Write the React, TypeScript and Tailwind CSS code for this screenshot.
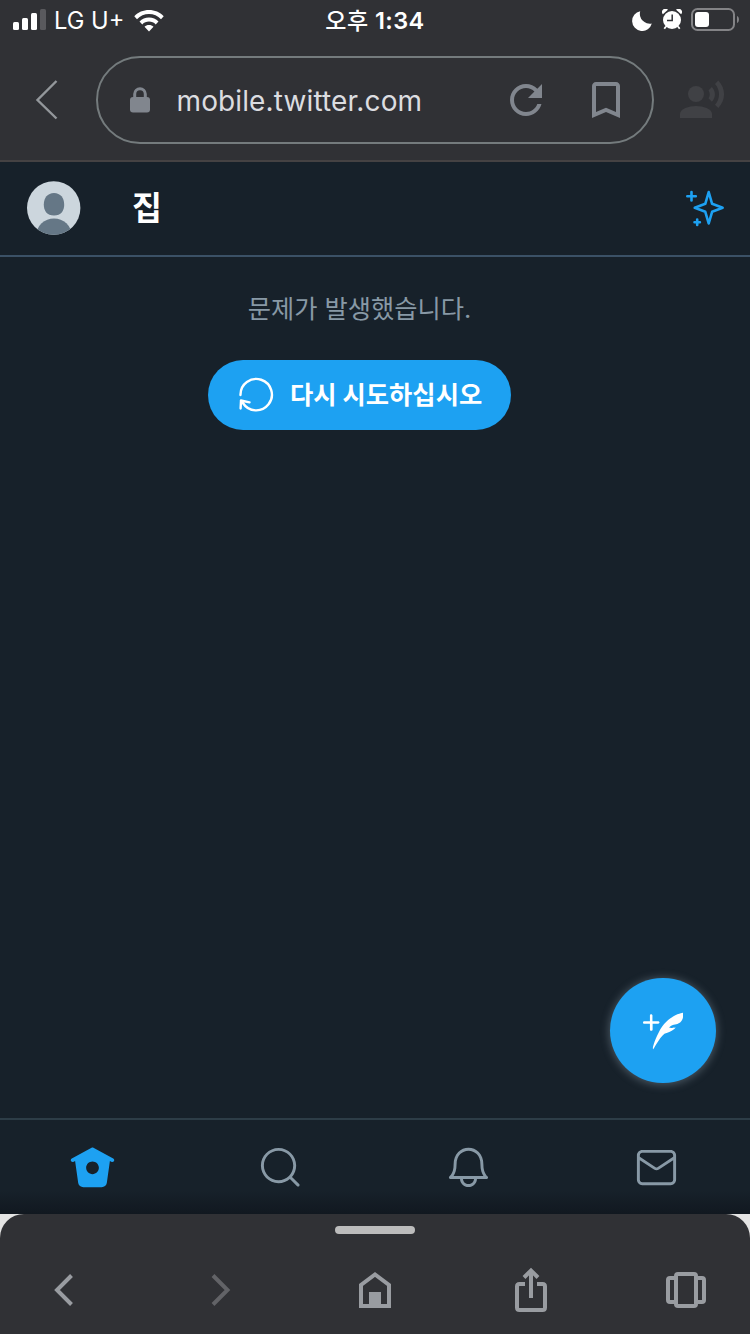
import type { ReactNode } from 'react';

const tabs = [
  {
    name: 'home',
    active: true,
    path: 'M22.58 7.35L12.475 1.897c-.297-.16-.654-.16-.95 0L1.425 7.35c-.486.264-.667.87-.405 1.356.18.335.525.525.88.525.16 0 .324-.038.475-.12l.734-.396 1.59 11.25c.216 1.214 1.31 2.062 2.66 2.062h9.282c1.35 0 2.444-.848 2.662-2.088l1.588-11.225.737.398c.485.263 1.092.082 1.354-.404.263-.486.08-1.093-.404-1.355zM12 15.435c-1.795 0-3.25-1.455-3.25-3.25s1.455-3.25 3.25-3.25 3.25 1.455 3.25 3.25-1.455 3.25-3.25 3.25z',
  },
  {
    name: 'search',
    active: false,
    path: 'M21.53 20.47l-3.66-3.66C19.195 15.24 20 13.214 20 11c0-4.97-4.03-9-9-9s-9 4.03-9 9 4.03 9 9 9c2.215 0 4.24-.804 5.808-2.13l3.66 3.66c.147.146.34.22.53.22s.385-.073.53-.22c.295-.293.295-.767.002-1.06zM3.5 11c0-4.135 3.365-7.5 7.5-7.5s7.5 3.365 7.5 7.5-3.365 7.5-7.5 7.5-7.5-3.365-7.5-7.5z',
  },
  {
    name: 'notifications',
    active: false,
    path: 'M21.697 16.468c-.02-.016-2.14-1.64-2.103-6.03.02-2.532-.812-4.782-2.347-6.335C15.872 2.71 14.01 1.94 12.005 1.93h-.013c-2.004.01-3.866.78-5.242 2.174-1.534 1.553-2.368 3.802-2.346 6.334.037 4.33-2.02 5.967-2.102 6.03-.26.193-.366.53-.265.838.102.308.39.515.712.515h4.92c.102 2.31 1.997 4.16 4.33 4.16s4.226-1.85 4.327-4.16h4.922c.322 0 .61-.206.71-.514.103-.307-.003-.645-.263-.838zM12 20.478c-1.505 0-2.73-1.177-2.828-2.658h5.656c-.1 1.48-1.323 2.66-2.828 2.66zM4.38 16.32c.74-1.132 1.548-3.028 1.524-5.896-.018-2.16.644-3.982 1.913-5.267C8.91 4.05 10.397 3.437 12 3.43c1.603.008 3.087.62 4.18 1.728 1.27 1.285 1.933 3.106 1.915 5.267-.024 2.868.785 4.765 1.525 5.896H4.38z',
  },
  {
    name: 'messages',
    active: false,
    path: 'M19.25 3.018H4.75C3.233 3.018 2 4.252 2 5.77v12.495c0 1.518 1.233 2.753 2.75 2.753h14.5c1.517 0 2.75-1.235 2.75-2.753V5.77c0-1.518-1.233-2.752-2.75-2.752zm-14.5 1.5h14.5c.69 0 1.25.56 1.25 1.25v.714l-8.05 5.367c-.273.18-.626.182-.9-.002L3.5 6.482v-.714c0-.69.56-1.25 1.25-1.25zm14.5 14.998H4.75c-.69 0-1.25-.56-1.25-1.25V8.24l7.24 4.83c.383.256.822.384 1.26.384.44 0 .877-.128 1.26-.383l7.24-4.83v10.022c0 .69-.56 1.25-1.25 1.25z',
  },
];

const StatusBar = () => (
  <div className="grid h-10 grid-cols-3 items-center text-white">
    <div className="flex items-center pl-[13px]">
      <svg width="33" height="22" viewBox="0 0 33 22" fill="currentColor">
        <rect x="0" y="13" width="6" height="8" rx="1.5" />
        <rect x="9" y="9" width="6" height="12" rx="1.5" />
        <rect x="18" y="4" width="6" height="17" rx="1.5" />
        <rect x="27" y="0" width="6" height="21" rx="1.5" fill="#59595d" />
      </svg>
      <span className="ml-2 w-[71px] pt-0.5 text-[23.7px] leading-9 whitespace-nowrap">LG U+</span>
      <svg className="ml-[8.5px] mt-px" width="30" height="22" viewBox="0 0 30 22" fill="currentColor">
        <path d="M15 0C9.300 0 4 2.200 0.300 6.200L3 9.200C6.200 5.900 10.400 4 15 4s8.800 1.900 12 5.200l2.700-3C26 2.200 20.700 0 15 0z" />
        <path d="M15 7.500c-3.700 0-7 1.400-9.500 3.900l2.800 3C10.100 12.600 12.400 11.600 15 11.600s4.900 1 6.700 2.800l2.800-3C22 8.900 18.700 7.500 15 7.500z" />
        <path d="M15 15c-1.800 0-3.300.6-4.500 1.700L15 21.600l4.500-4.900C18.300 15.600 16.800 15 15 15z" />
      </svg>
    </div>
    <div className="pt-0.5 text-center text-[23px] leading-9 font-medium tracking-[0.4px] whitespace-nowrap">
      오후 <span className="text-[23.5px] font-semibold">1:34</span>
    </div>
    <div className="flex items-center justify-end pr-[11px]">
      <svg className="mt-px" width="20" height="20" viewBox="0 0 20 20" fill="currentColor">
        <path d="M8.200 0.200A10 10 0 1 0 19.800 12.600A10 10 0 0 1 8.200 0.200z" />
      </svg>
      <svg className="-mt-0.5 ml-2.5" width="20" height="21" viewBox="0 0 20 21">
        <circle cx="10" cy="11" r="9" fill="currentColor" />
        <path d="M0.900 5.200A3.100 3.100 0 0 1 5.900 0.800zM19.100 5.200A3.100 3.100 0 0 0 14.100 0.800z" fill="currentColor" />
        <path d="M4 17.500L2.300 19.700M16 17.500L17.700 19.700" fill="none" stroke="currentColor" strokeWidth="1.800" />
        <path d="M10.200 5.500v6H5" fill="none" stroke="#303135" strokeWidth="1.500" />
      </svg>
      <svg className="-mt-px ml-[9px]" width="48" height="23" viewBox="0 0 48 23">
        <rect x="1" y="1" width="42" height="21" rx="5.500" fill="none" stroke="#838386" strokeWidth="2" />
        <rect x="4" y="4" width="14" height="15" rx="3" fill="currentColor" />
        <path d="M46 8c2.600.8 2.600 6.200 0 7z" fill="#838386" />
      </svg>
    </div>
  </div>
);

const AddressBar = () => (
  <div className="flex h-[122px] items-center border-b-2 border-[#454243] pl-[35px] text-[#81868e]">
    <svg width="24" height="40" viewBox="0 0 24 40" fill="none" stroke="#93979b" strokeWidth="2.400">
      <path d="M21.500 1L2.500 20L21.500 38.500" />
    </svg>
    <div className="ml-[37px] flex h-[88px] w-[558px] items-center rounded-full border-2 border-[#747b7d] pl-8">
      <svg width="20" height="26" viewBox="0 0 20 26">
        <rect x="0" y="10" width="20" height="15.500" rx="3" fill="currentColor" />
        <path d="M4.700 12V7a5.300 5.300 0 0 1 10.600 0V12" fill="none" stroke="currentColor" strokeWidth="3" />
      </svg>
      <span className="ml-[26.500px] w-[333.500px] pt-0.5 text-[28px] leading-10 tracking-[0.120px] text-[#dcdde0]">
        mobile.twitter.com
      </span>
      <svg width="32" height="32" viewBox="4 4 16 16" fill="currentColor">
        <path d="M17.650 6.350C16.200 4.900 14.210 4 12 4c-4.420 0-7.990 3.580-7.990 8s3.570 8 7.990 8c3.730 0 6.840-2.550 7.730-6h-2.080c-.82 2.330-3.040 4-5.650 4-3.310 0-6-2.690-6-6s2.690-6 6-6c1.660 0 3.140.69 4.220 1.780L13 11h7V4l-2.350 2.350z" />
      </svg>
      <svg className="ml-[50px]" width="28" height="36" viewBox="5 3 14 18" fill="currentColor">
        <path d="M17 3H7c-1.100 0-1.990.9-1.990 2L5 21l7-3 7 3V5c0-1.100-.9-2-2-2zm0 15l-5-2.180L7 18V5h10v13z" />
      </svg>
    </div>
    <svg className="ml-[26px]" width="46" height="40" viewBox="0 0 46 40" fill="#404145">
      <circle cx="16" cy="14" r="8" />
      <path d="M0 38v-4c0-5.300 9-8 16-8s16 2.700 16 8v4z" />
      <path d="M31.900 7.100l-3.400 3.400c1.700 2.400 1.700 5.400 0 7.800l3.400 3.400c4-4.100 4-10.200 0-14.600z" />
      <path d="M38.300 0.600L35 3.900c5.400 5.900 5.400 14.900 0 20.800l3.300 3.300c7.700-7.800 7.700-19.400 0-27.400z" />
    </svg>
  </div>
);

const PageHeader = () => (
  <header className="flex h-[95px] items-center border-b-2 border-[#3b5166] pr-[26px] pb-px pl-[27px]">
    <svg width="54" height="54" viewBox="0 0 54 54">
      <clipPath id="avatar">
        <circle cx="26.700" cy="27" r="26.700" />
      </clipPath>
      <g clipPath="url(#avatar)">
        <rect width="54" height="54" fill="#ccd6dd" />
        <path d="M27 12c6.500 0 10.200 5 10.200 11.500S34 34.500 27 34.500s-10.200-4.500-10.200-11S20.500 12 27 12z" fill="#657786" />
        <ellipse cx="27" cy="54" rx="17.500" ry="16.500" fill="#657786" />
      </g>
    </svg>
    <h1 className="mt-0.5 ml-[51px] flex-1 text-[32.500px] leading-none font-bold text-white">집</h1>
    <svg className="-mt-px" width="38" height="38" viewBox="0 0 38 38" fill="none" stroke="#1da1f2" strokeWidth="2.600" strokeLinejoin="round" strokeLinecap="round">
      <path d="M22.700 3L26.100 14.800L36.600 18.800L26.100 22.800L22.700 34.500L19.300 22.800L8.800 18.800L19.300 14.800z" />
      <path d="M5.500 3v8.500M1.300 7.300h8.500M11.200 30.500v5.500M8.500 33.300h5.400" />
    </svg>
  </header>
);

const ErrorState = () => (
  <main className="relative flex flex-1 flex-col items-center pt-8 pr-[31px]">
    <p className="text-[25.250px] leading-10 text-[#8899a6]">문제가 발생했습니다.</p>
    <button className="mt-[31px] flex h-[70px] w-[303px] items-center rounded-full bg-[#1da1f2] pl-[30px] text-[25.300px] font-bold text-white">
      <svg width="36" height="36" viewBox="0 0 36 36" fill="none" stroke="currentColor" strokeWidth="2.400" strokeLinecap="round" strokeLinejoin="round">
        <path d="M2.500 18A15.700 15.700 0 1 1 4.900 26L3 23.500M2.600 31.500L3 23.500L11.500 25.300" />
      </svg>
      <span className="ml-4 whitespace-nowrap">다시 시도하십시오</span>
    </button>
    {/* Floating compose button */}
    <button className="absolute right-[34.500px] bottom-[35px] flex size-[105.500px] items-center justify-center rounded-full bg-[#1da1f2] text-white shadow-[0_1px_8px_1px_rgba(136,153,166,0.45)]">
      <svg className="mb-0.5" width="40.5" height="40.5" viewBox="0 0 24 24" fill="currentColor">
        <path d="M8.800 7.200H5.600V3.900c0-.4-.3-.8-.8-.8s-.7.4-.7.8v3.300H.8c-.4 0-.8.3-.8.8s.3.8.8.8h3.300v3.300c0 .4.3.8.8.8s.8-.3.8-.8V8.700H9c.4 0 .8-.3.8-.8s-.5-.7-1-.7zm15-4.900v-.1h-.1c-.1 0-9.200 1.200-14.400 11.700-3.800 7.600-3.600 9.900-3.300 9.900.3.1 3.400-6.500 6.700-9.200 5.200-1.100 6.600-3.600 6.600-3.600s-1.500.2-2.100.2c-.8 0-1.400-.2-1.700-.3 1.300-1.200 2.400-1.500 3.500-1.700.9-.2 1.800-.4 3-1.200 2.200-1.600 1.900-5.500 1.800-5.700z" />
      </svg>
    </button>
  </main>
);

const TabBar = () => (
  <nav className="flex h-[96px] items-center justify-between border-t-2 border-[#2d3d47] bg-linear-to-b from-[#17212a] from-75% to-[#111820] pr-[70px] pl-[69px]">
    {tabs.map((tab) => (
      <button key={tab.name}>
        <svg width="47" height="47" viewBox="0 0 24 24" fill={tab.active ? '#1da1f2' : '#8899a6'}>
          <path d={tab.path} />
        </svg>
      </button>
    ))}
  </nav>
);

const ToolButton = ({ children }: { children: ReactNode }) => (
  <button className="flex w-11 justify-center">
    <svg width="44" height="48" viewBox="0 0 44 48" fill="none" stroke="#999ca1" strokeWidth="4">
      {children}
    </svg>
  </button>
);

const BrowserToolbar = () => (
  <div className="bg-[#e4e4e4]">
    <div className="flex h-[120px] flex-col items-center rounded-t-[24px] bg-[#303135] pt-3">
      <div className="h-2 w-20 rounded-full bg-[#bcbcbc]" />
      <div className="mt-8 flex w-full justify-between px-[42px]">
        <ToolButton>
          <path d="M29.500 9.500L15 24L29.500 38.500" />
        </ToolButton>
        <ToolButton>
          <path d="M15 9.500L29.500 24L15 38.500" stroke="#626367" />
        </ToolButton>
        <ToolButton>
          <path d="M8 40V19L22 8.500L36 19V40z" />
          <path d="M16 26h12v14H16z" fill="#999ca1" stroke="none" />
        </ToolButton>
        <ToolButton>
          <path d="M16 18H10.500q-2.500 0-2.500 2.500V41.500q0 2.500 2.500 2.500H33.500q2.500 0 2.500-2.500V20.500q0-2.500-2.500-2.500H28M22 32V5M15 11.500L22 4.500L29 11.500" />
        </ToolButton>
        <ToolButton>
          <rect x="12" y="8" width="20" height="32" rx="2" />
          <path d="M12 12H6q-2 0-2 2V34q0 2 2 2h6M32 12h6q2 0 2 2V34q0 2-2 2H32" />
        </ToolButton>
      </div>
    </div>
  </div>
);

const App = () => (
  <div className="flex h-[1334px] w-[750px] flex-col overflow-hidden bg-[#17212a] font-['Inter','Noto_Sans_CJK_KR',sans-serif]">
    <div className="bg-[#303135]">
      <StatusBar />
      <AddressBar />
    </div>
    <PageHeader />
    <ErrorState />
    <TabBar />
    <BrowserToolbar />
  </div>
);

export default App;
